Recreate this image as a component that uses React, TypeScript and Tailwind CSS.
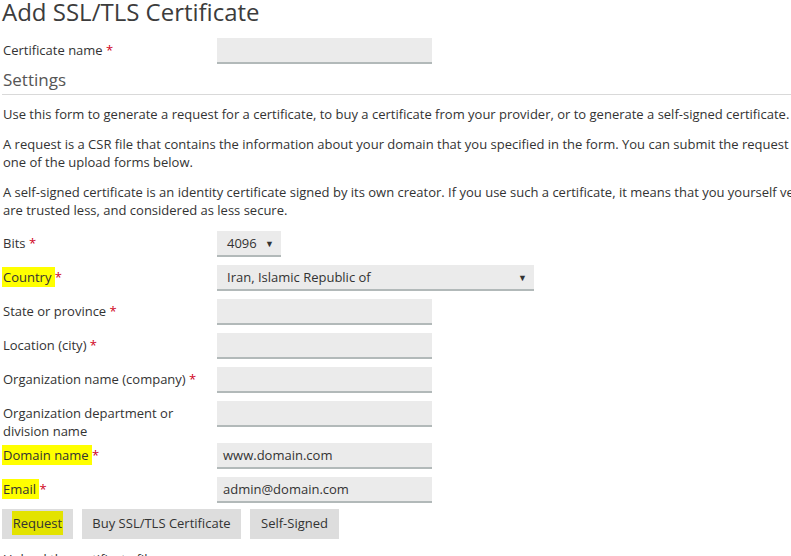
import React from "react"

const font = { fontFamily: '"Open Sans", "Liberation Sans", sans-serif' }

const Star = () => <span className="text-[#d0021b]"> *</span>

const Field = ({ value = "", width = "w-[215px]" }: { value?: string; width?: string }) => (
  <div
    className={`${width} h-[26px] shrink-0 border-b-2 border-[#b2b9b9] bg-[#ebebeb] pl-[6px] text-[13px] leading-[24px] text-[#333]`}
  >
    {value}
  </div>
)

const Select = ({ value, width }: { value: string; width: string }) => (
  <div
    className={`${width} flex h-[26px] shrink-0 items-center justify-between border-b-2 border-[#b2b9b9] bg-[#ebebeb] pl-[10px] pr-[7px] pt-[2px] text-[13px] text-[#333]`}
  >
    <span>{value}</span>
    <span className="text-[9px]">▼</span>
  </div>
)

const Row = ({
  label,
  children,
  className = "mb-[8px]",
}: {
  label: React.ReactNode
  children: React.ReactNode
  className?: string
}) => (
  <div className={`flex items-start ${className}`}>
    <div className="w-[215px] shrink-0 pl-[1px] pt-[3px] text-[13px] leading-[18px] text-[#333]">{label}</div>
    {children}
  </div>
)

const Mark = ({ children }: { children: React.ReactNode }) => (
  <span className="-ml-[1px] bg-[#ffff00] py-[1px] pl-[1px]">{children}</span>
)

export default function App() {
  return (
    <div style={font} className="h-[556px] w-[791px] overflow-hidden bg-white pl-[2px] text-[#333]">
      <h1 className="text-[24px] leading-[24px] text-[#3c3c3c]">Add SSL/TLS Certificate</h1>

      <div className="mt-[14px] flex items-start">
        <div className="w-[215px] shrink-0 pl-[1px] pt-[3px] text-[13px] leading-[18px]">
          Certificate name<Star />
        </div>
        <Field />
      </div>

      <div className="mt-[4px] border-b border-[#d9d9d9] pb-[2px] pl-[1px] text-[17px] leading-[24px] text-[#555]">
        Settings
      </div>

      <div className="mt-[10px] pl-[1px] text-[13px] leading-[18px]">
        <p className="whitespace-nowrap">
          Use this form to generate a request for a certificate, to buy a certificate from your provider, or to generate a self-signed certificate.
        </p>
        <p className="mt-[12px] whitespace-nowrap">
          A request is a CSR file that contains the information about your domain that you specified in the form. You can submit the request to a certificate authority and later install the certificate using
        </p>
        <p className="whitespace-nowrap">one of the upload forms below.</p>
        <p className="mt-[12px] whitespace-nowrap">
          A self-signed certificate is an identity certificate signed by its own creator. If you use such a certificate, it means that you yourself verify your identity. Self-signed certificates
        </p>
        <p className="whitespace-nowrap">are trusted less, and considered as less secure.</p>
      </div>

      <div className="mt-[12px]">
        <Row label={<>Bits<Star /></>}>
          <Select value="4096" width="w-[64px]" />
        </Row>
        <Row label={<><Mark>Country </Mark><Star /></>}>
          <Select value="Iran, Islamic Republic of" width="w-[317px]" />
        </Row>
        <Row label={<>State or province<Star /></>}>
          <Field />
        </Row>
        <Row label={<>Location (city)<Star /></>}>
          <Field />
        </Row>
        <Row label={<>Organization name (company)<Star /></>}>
          <Field />
        </Row>
        <Row label={<>Organization department or<br />division name</>} className="mb-[3px]">
          <Field />
        </Row>
        <Row label={<><Mark>Domain name </Mark><Star /></>}>
          <Field value="www.domain.com" />
        </Row>
        <Row label={<><Mark>Email </Mark><Star /></>} className="mb-[6px]">
          <Field value="admin@domain.com" />
        </Row>
      </div>

      <div className="flex gap-[9px] text-[13px]">
        <button className="h-[30px] w-[71px] bg-[#dddddd] text-[#333]">
          <span className="bg-[#e3e300] px-[1px] py-[3px]">Request</span>
        </button>
        <button className="h-[30px] w-[159px] bg-[#dddddd] text-[#333]">Buy SSL/TLS Certificate</button>
        <button className="h-[30px] w-[89px] bg-[#dddddd] text-[#333]">Self-Signed</button>
      </div>

      <p className="mt-[11px] pl-[1px] text-[13px] leading-[18px]">Upload the certificate files</p>
    </div>
  )
}
